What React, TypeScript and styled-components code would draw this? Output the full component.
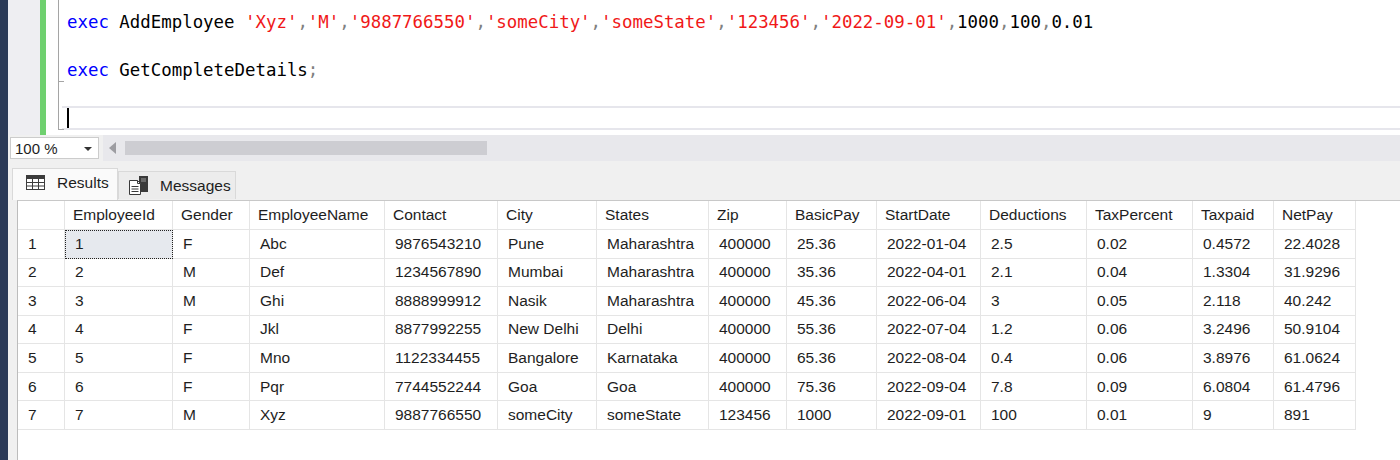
import React from "react";
import styled, { createGlobalStyle } from "styled-components";

const GlobalStyle = createGlobalStyle`
  html, body {
    margin: 0;
    padding: 0;
    background: #ffffff;
  }
  body {
    width: 1400px;
    height: 460px;
    overflow: hidden;
    font-family: "Liberation Sans", Arial, sans-serif;
  }
`;

const columns = [
  { name: "", width: 47 },
  { name: "EmployeeId", width: 108 },
  { name: "Gender", width: 77 },
  { name: "EmployeeName", width: 135 },
  { name: "Contact", width: 113 },
  { name: "City", width: 99 },
  { name: "States", width: 112 },
  { name: "Zip", width: 78 },
  { name: "BasicPay", width: 90 },
  { name: "StartDate", width: 104 },
  { name: "Deductions", width: 106 },
  { name: "TaxPercent", width: 106 },
  { name: "Taxpaid", width: 81 },
  { name: "NetPay", width: 82 },
];

const rows = [
  ["1", "F", "Abc", "9876543210", "Pune", "Maharashtra", "400000", "25.36", "2022-01-04", "2.5", "0.02", "0.4572", "22.4028"],
  ["2", "M", "Def", "1234567890", "Mumbai", "Maharashtra", "400000", "35.36", "2022-04-01", "2.1", "0.04", "1.3304", "31.9296"],
  ["3", "M", "Ghi", "8888999912", "Nasik", "Maharashtra", "400000", "45.36", "2022-06-04", "3", "0.05", "2.118", "40.242"],
  ["4", "F", "Jkl", "8877992255", "New Delhi", "Delhi", "400000", "55.36", "2022-07-04", "1.2", "0.06", "3.2496", "50.9104"],
  ["5", "F", "Mno", "1122334455", "Bangalore", "Karnataka", "400000", "65.36", "2022-08-04", "0.4", "0.06", "3.8976", "61.0624"],
  ["6", "F", "Pqr", "7744552244", "Goa", "Goa", "400000", "75.36", "2022-09-04", "7.8", "0.09", "6.0804", "61.4796"],
  ["7", "M", "Xyz", "9887766550", "someCity", "someState", "123456", "1000", "2022-09-01", "100", "0.01", "9", "891"],
];

const codeLines = [
  "exec AddEmployee 'Xyz','M','9887766550','someCity','someState','123456','2022-09-01',1000,100,0.01",
  "",
  "exec GetCompleteDetails;",
  "",
  "",
];

type TokKind = "kw" | "str" | "pun" | "plain";

const tokenize = (line: string) => {
  const out: { text: string; kind: TokKind }[] = [];
  const re = /('[^']*')|(\bexec\b)|([,;])|([^,;']+?(?=\bexec\b|[,;']|$))/g;
  let m: RegExpExecArray | null;
  while ((m = re.exec(line)) !== null) {
    if (m[0] === "") { re.lastIndex++; continue; }
    if (m[1]) out.push({ text: m[1], kind: "str" });
    else if (m[2]) out.push({ text: m[2], kind: "kw" });
    else if (m[3]) out.push({ text: m[3], kind: "pun" });
    else out.push({ text: m[0], kind: "plain" });
  }
  return out;
};

const tokenColors: Record<TokKind, string> = {
  kw: "#0000ff",
  str: "#f01818",
  pun: "#808080",
  plain: "#000000",
};

const GridIcon = () => (
  <svg width="19" height="15" viewBox="0 0 19 15">
    <rect x="0.5" y="0.5" width="18" height="14" fill="#fff" stroke="#3c3c3c" />
    <rect x="0.5" y="0.5" width="18" height="3.5" fill="#3c3c3c" />
    <line x1="6.5" y1="1" x2="6.5" y2="14" stroke="#3c3c3c" />
    <line x1="12.5" y1="1" x2="12.5" y2="14" stroke="#3c3c3c" />
    <line x1="1" y1="7.5" x2="18" y2="7.5" stroke="#3c3c3c" />
    <line x1="1" y1="11" x2="18" y2="11" stroke="#3c3c3c" />
  </svg>
);

const MessagesIcon = () => (
  <svg width="22" height="19" viewBox="0 0 22 19">
    <rect x="11.5" y="0.5" width="8" height="15" fill="#3a3a3a" stroke="#3a3a3a" />
    <line x1="13" y1="3" x2="18" y2="3" stroke="#9a9a9a" />
    <line x1="13" y1="5" x2="18" y2="5" stroke="#9a9a9a" />
    <path d="M1.5 4.5 H9.5 L12.5 7.5 V18.5 H1.5 Z" fill="#ffffff" stroke="#3a3a3a" />
    <path d="M9.5 4.5 V7.5 H12.5" fill="none" stroke="#3a3a3a" />
    <line x1="3.5" y1="10.5" x2="10.5" y2="10.5" stroke="#3a3a3a" />
    <line x1="3.5" y1="13" x2="10.5" y2="13" stroke="#3a3a3a" />
    <line x1="3.5" y1="15.5" x2="10.5" y2="15.5" stroke="#3a3a3a" />
  </svg>
);

const App = () => {
  return (
    <Frame>
      <GlobalStyle />
      <NavBar />
      <Main>
        <Editor>
          <Gutter />
          <ChangeBar />
          <MarginPad />
          <CodeArea>
            {codeLines.map((line, i) => (
              <CodeRow key={i} $current={i === 4} $blockEnd={i === 2 || i === 4}>
                {i === 4 && <Caret />}
                {tokenize(line).map((tok, j) => (
                  <Tok key={j} $color={tokenColors[tok.kind]}>{tok.text}</Tok>
                ))}
              </CodeRow>
            ))}
          </CodeArea>
        </Editor>
        <ZoomBar>
          <ZoomBox>
            <span>100 %</span>
            <DropArrow />
          </ZoomBox>
          <HScroll>
            <LeftArrow />
            <Thumb />
          </HScroll>
        </ZoomBar>
        <TabStrip>
          <Tab $active>
            <GridIcon />
            <TabLabel>Results</TabLabel>
          </Tab>
          <Tab>
            <MessagesIcon />
            <TabLabel>Messages</TabLabel>
          </Tab>
        </TabStrip>
        <ResultsPane>
          <GridArea>
            <Table $cols={columns.map((c) => c.width + "px").join(" ")}>
              {columns.map((c, i) => (
                <HeadCell key={i}>{c.name}</HeadCell>
              ))}
              {rows.map((r, ri) => (
                <React.Fragment key={ri}>
                  <Cell>{ri + 1}</Cell>
                  {r.map((v, ci) => (
                    <Cell key={ci} $selected={ri === 0 && ci === 0}>{v}</Cell>
                  ))}
                </React.Fragment>
              ))}
            </Table>
          </GridArea>
        </ResultsPane>
      </Main>
    </Frame>
  );
};

const Frame = styled.div`
  display: flex;
  flex-direction: row;
  width: 1400px;
  height: 460px;
  overflow: hidden;
`;

const NavBar = styled.div`
  width: 8px;
  flex-shrink: 0;
  background: #2b3a57;
`;

const Main = styled.div`
  flex: 1;
  display: flex;
  flex-direction: column;
  min-width: 0;
`;

const Editor = styled.div`
  display: flex;
  flex-direction: row;
  height: 135px;
  background: #ffffff;
  flex-shrink: 0;
`;

const Gutter = styled.div`
  width: 32px;
  background: #eeeef2;
`;

const ChangeBar = styled.div`
  width: 6px;
  background: #6fd06f;
`;

const MarginPad = styled.div`
  width: 12px;
  background: #ffffff;
`;

const CodeArea = styled.div`
  flex: 1;
  height: 130px;
  padding-top: 10px;
  box-sizing: border-box;
  border-left: 1px solid #a5a5a5;
`;

const CodeRow = styled.div<{ $current?: boolean; $blockEnd?: boolean }>`
  position: relative;
  height: 24px;
  line-height: 24px;
  padding-left: 8px;
  box-sizing: border-box;
  white-space: pre;
  font-family: "DejaVu Sans Mono", "Liberation Mono", monospace;
  font-size: 17.4px;
  display: flex;
  align-items: center;
  ${(p) =>
    p.$current &&
    `
    margin-left: 3px;
    padding-left: 5px;
    border-top: 2px solid #e6e6ec;
    border-bottom: 2px solid #e6e6ec;
  `}
  ${(p) =>
    p.$blockEnd &&
    `
    &::before {
      content: "";
      position: absolute;
      left: ${p.$current ? "-3px" : "0"};
      bottom: ${p.$current ? "-2px" : "0"};
      width: 5px;
      height: 1px;
      background: #a5a5a5;
    }
  `}
`;

const Tok = styled.span<{ $color: string }>`
  color: ${(p) => p.$color};
`;

const Caret = styled.span`
  display: inline-block;
  width: 2px;
  height: 20px;
  background: #000;
`;

const ZoomBar = styled.div`
  display: flex;
  align-items: center;
  height: 26px;
  background: #f0f0f0;
  padding-left: 2px;
  flex-shrink: 0;
`;

const ZoomBox = styled.div`
  width: 89px;
  height: 22px;
  box-sizing: border-box;
  background: #ffffff;
  border: 1px solid #cccccc;
  display: flex;
  align-items: center;
  justify-content: space-between;
  padding: 0 6px 0 4px;
  font-size: 15px;
  color: #1e1e1e;
`;

const DropArrow = styled.span`
  width: 0;
  height: 0;
  border-left: 4px solid transparent;
  border-right: 4px solid transparent;
  border-top: 4px solid #333;
  margin-top: 2px;
`;

const HScroll = styled.div`
  flex: 1;
  height: 26px;
  margin-left: 4px;
  padding-left: 6px;
  background: #e8e8ec;
  display: flex;
  align-items: center;
`;

const LeftArrow = styled.span`
  width: 0;
  height: 0;
  border-top: 6px solid transparent;
  border-bottom: 6px solid transparent;
  border-right: 7px solid #9d9da2;
`;

const Thumb = styled.div`
  width: 362px;
  height: 14px;
  margin-left: 9px;
  background: #cdcdd2;
`;

const TabStrip = styled.div`
  display: flex;
  align-items: flex-end;
  height: 39px;
  padding-left: 4px;
  background: #f0f0f0;
  flex-shrink: 0;
`;

const Tab = styled.div<{ $active?: boolean }>`
  display: flex;
  align-items: center;
  gap: ${(p) => (p.$active ? "12px" : "10px")};
  box-sizing: border-box;
  height: ${(p) => (p.$active ? "32px" : "28px")};
  width: ${(p) => (p.$active ? "106px" : "118px")};
  padding-left: ${(p) => (p.$active ? "13px" : "9px")};
  padding-bottom: ${(p) => (p.$active ? "4px" : "0")};
  background: ${(p) => (p.$active ? "#fafafa" : "#ececec")};
  border: 1px solid #d9d9d9;
  border-bottom: none;
  ${(p) => !p.$active && "margin-bottom: 1px;"}
`;

const TabLabel = styled.span`
  font-size: 15.5px;
  color: #1e1e1e;
`;

const ResultsPane = styled.div`
  flex: 1;
  display: flex;
  background: #f0f0f0;
  padding-left: 9px;
  min-height: 0;
`;

const GridArea = styled.div`
  flex: 1;
  background: #ffffff;
  border-top: 1px solid #c8c8c8;
  border-left: 1px solid #bcbcbc;
`;

const Table = styled.div<{ $cols: string }>`
  display: grid;
  grid-template-columns: ${(p) => p.$cols};
  grid-template-rows: 29px repeat(7, 28.57px);
  width: max-content;
  font-size: 15.5px;
  color: #1e1e1e;
`;

const HeadCell = styled.div`
  display: flex;
  align-items: center;
  padding-left: 8px;
  box-sizing: border-box;
  border-right: 1px solid #e5e5e5;
  border-bottom: 1px solid #e5e5e5;
  white-space: nowrap;
  overflow: hidden;
`;

const Cell = styled.div<{ $selected?: boolean }>`
  display: flex;
  align-items: center;
  padding-left: 10px;
  box-sizing: border-box;
  border-right: 1px solid #e5e5e5;
  border-bottom: 1px solid #e5e5e5;
  white-space: nowrap;
  overflow: hidden;
  ${(p) =>
    p.$selected &&
    `
    background: #e6e9ee;
    outline: 1px dotted #222;
    outline-offset: -1px;
  `}
`;

export default App;
